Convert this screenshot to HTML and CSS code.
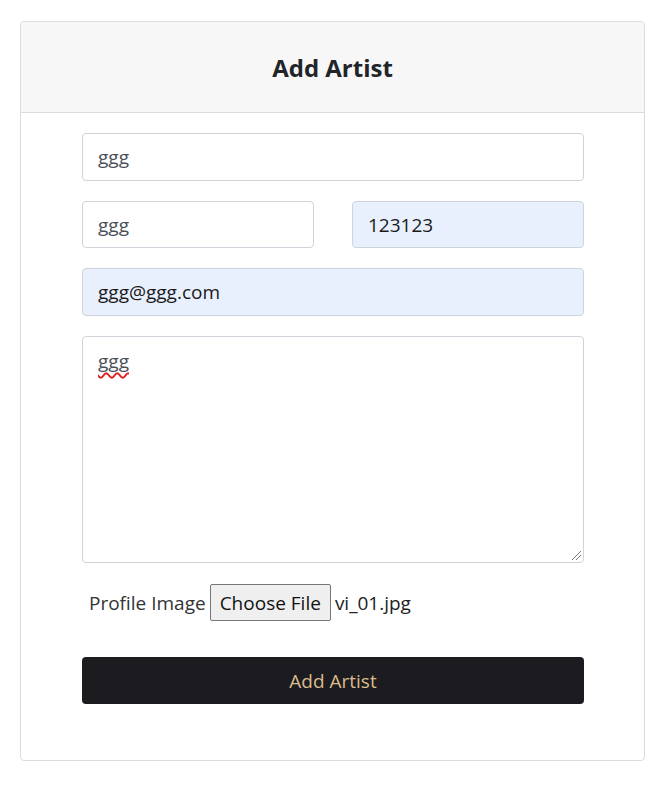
FILE: index.html
```html
<!DOCTYPE html>
<html>
<head>
<meta charset="utf-8">
<link rel="stylesheet" href="styles.css">
</head>
<body>
<div class="card">
  <div class="card-header"><h3 class="title">Add Artist</h3></div>
  <form class="card-body">
    <input class="field" type="text" value="ggg">
    <div class="row">
      <input class="field short" type="text" value="ggg">
      <input class="field short autofill" type="text" value="123123">
    </div>
    <input class="field autofill" type="text" value="ggg@ggg.com">
    <div class="field area"><span class="spell">ggg</span><span class="grip"></span></div>
    <div class="file-row">
      <span class="label">Profile Image</span>
      <span class="file-btn">Choose File</span>
      <span class="file-name">vi_01.jpg</span>
    </div>
    <button class="submit" type="button">Add Artist</button>
  </form>
</div>
</body>
</html>
```
FILE: styles.css
```css
* { box-sizing: border-box; }
html, body { margin: 0; background: #fff; }
body {
  padding: 21px 21px 0 20px;
  font-family: "Open Sans", "Noto Sans", sans-serif;
  color: #212529;
}
.card {
  border: 1px solid #dcdcdc;
  border-radius: 4px;
  height: 740px;
  overflow: hidden;
}
.card-header {
  background: #f7f7f7;
  border-bottom: 1px solid #dcdcdc;
  height: 91px;
  display: flex;
  align-items: center;
  justify-content: center;
}
.title {
  margin: 0;
  font-size: 24px;
  font-weight: 700;
  color: #212529;
}
.card-body {
  padding: 20px 60px 0 61px;
  display: flex;
  flex-direction: column;
  gap: 20px;
  margin: 0;
}
.field {
  display: block;
  width: 100%;
  height: 48px;
  padding: 0 15px;
  font-family: inherit;
  font-size: 19px;
  color: #495057;
  border: 1px solid #ced4da;
  border-radius: 4px;
  background: #fff;
  outline: none;
}
.field.short { height: 47px; }
.autofill { background: #e8f0fe; color: #1a1a1a; }
.row {
  display: grid;
  grid-template-columns: 232px 232px;
  justify-content: space-between;
}
.area {
  position: relative;
  height: 227px;
  padding: 10px 15px;
  line-height: 28px;
}
.spell {
  text-decoration: underline wavy #e0201c;
  text-decoration-thickness: 1.5px;
  text-decoration-skip-ink: none;
  text-underline-offset: 4px;
}
.grip {
  position: absolute;
  right: 2px;
  bottom: 2px;
  width: 9px;
  height: 9px;
  background: linear-gradient(135deg, transparent 0 45%, #777 45% 52%, transparent 52% 70%, #777 70% 77%, transparent 77%);
}
.file-row {
  display: flex;
  align-items: center;
  gap: 4px;
  padding-left: 7px;
  margin-top: 1px;
  font-size: 19px;
  color: #333;
  height: 37px;
}
.file-btn {
  display: inline-flex;
  align-items: center;
  height: 37px;
  padding: 0 9px;
  background: #efefef;
  border: 1px solid #767676;
  border-radius: 2px;
  color: #111;
}
.file-name { color: #222; }
.submit {
  margin-top: 16px;
  height: 47px;
  width: 100%;
  background: #1c1b20;
  color: #d9bc8c;
  border: none;
  border-radius: 4px;
  font-family: inherit;
  font-size: 19px;
}
```
